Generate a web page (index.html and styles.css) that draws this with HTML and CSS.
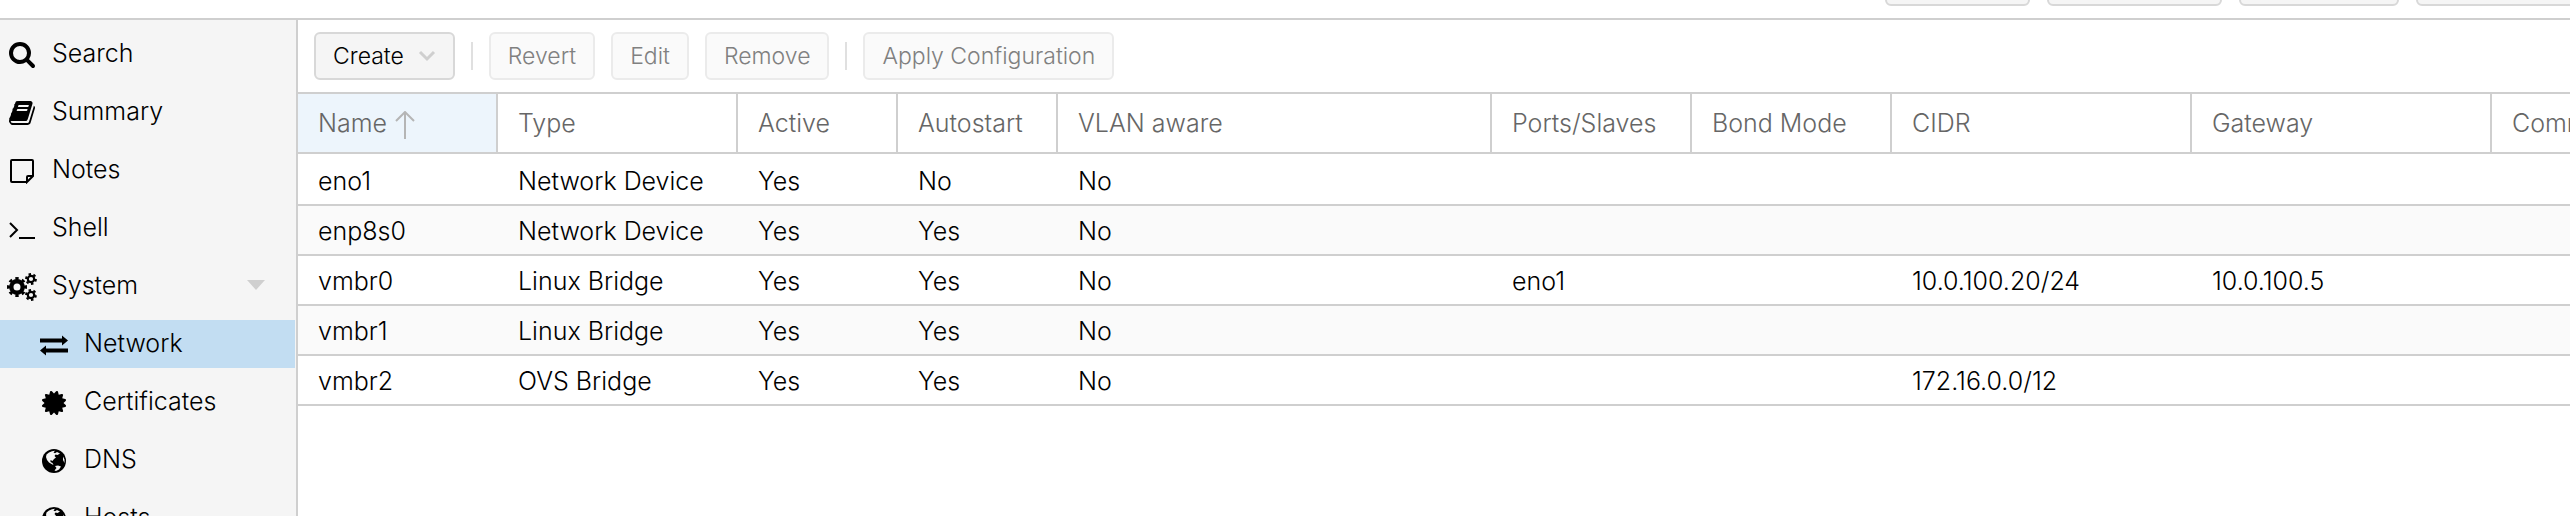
FILE: index.html
```html
<!DOCTYPE html>
<html lang="en">
<head>
<meta charset="utf-8">
<title>Network</title>
<link rel="stylesheet" href="styles.css">
</head>
<body>
<svg class="defs" aria-hidden="true">
  <symbol id="globe" viewBox="0 0 24 24">
    <circle cx="12" cy="12" r="12"/>
    <path fill="#f5f5f5" d="M4.500 5.500L7 3.500 10 2.300 13 1.800 11.500 3.500 13 4.200 15 3 18 4.500 15.500 6 13.500 5.500 12.500 7 14 8.500 12 10 10.500 12 8.500 11 8.500 13 10.500 14 11.500 16 9.500 15 7 13.500 5 11 4 8ZM13 17L16 16.500 19 17.500 17 20.500 14 22 12.500 21.500 14.500 19ZM21 7.500L22.500 10.500 22.500 14 21 11Z"/>
  </symbol>
</svg>
<header class="topbar">
  <button class="btn top-a"></button>
  <button class="btn top-b"></button>
  <button class="btn top-c"></button>
  <button class="btn top-d"></button>
</header>
<div class="layout">
  <nav class="sidebar">
    <a class="item" href="#"><svg class="icon" viewBox="64 128 1664 1664"><path d="M1216 832q0-185-131.500-316.500t-316.500-131.500-316.500 131.500-131.500 316.500 131.500 316.500 316.500 131.500 316.500-131.500 131.500-316.500zm512 832q0 52-38 90t-90 38q-54 0-90-38l-343-342q-179 124-399 124-143 0-273.500-55.500t-225-150-150-225-55.500-273.500 55.500-273.500 150-225 225-150 273.500-55.500 273.500 55.500 225 150 150 225 55.500 273.500q0 220-124 399l343 343q37 37 37 90z"/></svg>Search</a>
    <a class="item" href="#"><svg class="icon" viewBox="64 64 1664 1664"><path d="M1703 478q40 57 18 129l-275 906q-19 64-76.500 107.500t-122.500 43.500h-923q-77 0-148.500-53.500t-99.500-131.500q-24-67-2-127 0-4 3-27t4-37q1-8-3-21.500t-3-19.500q2-11 8-21t16.500-23.500 16.500-23.500q23-38 45-91.500t30-91.500q3-10 .5-30t-.5-28q3-11 17-28t17-23q21-36 42-92t25-90q1-9-2.500-32t.5-28q4-13 22-30.500t22-22.500q19-26 42.500-84.500t27.500-96.500q1-8-3-25.500t-2-26.500q2-8 9-18t18-23 17-21q8-12 16.500-30.500t15-35 16-36 19.500-32 26.500-23.500 36-11.500 47.500 5.500l-1 3q38-9 51-9h761q74 0 114 56t18 130l-274 906q-36 119-71.500 153.500t-128.500 34.500h-869q-27 0-38 15-11 16-1 43 24 70 144 70h923q29 0 56-15.500t35-41.500l300-987q7-22 5-57 38 15 59 43zm-1064 2q-4 13 2 22.500t20 9.500h608q13 0 25.500-9.500t16.500-22.500l21-64q4-13-2-22.500t-20-9.500h-608q-13 0-25.500 9.500t-16.500 22.500zm-83 256q-4 13 2 22.500t20 9.500h608q13 0 25.500-9.500t16.500-22.500l21-64q4-13-2-22.500t-20-9.500h-608q-13 0-25.500 9.500t-16.500 22.500z"/></svg>Summary</a>
    <a class="item" href="#"><svg class="icon" viewBox="0 0 26 26"><path class="line" d="M17.500 24H3Q2 24 2 23V3Q2 2 3 2H23Q24 2 24 3V18L18 24V19Q18 18 19 18H24"/></svg>Notes</a>
    <a class="item" href="#"><svg class="icon" viewBox="0 0 26 26"><path class="line" d="M1 7L8 14 1 21M10 22H26"/></svg>Shell</a>
    <a class="item" href="#"><svg class="icon wide" viewBox="0 0 30 30"><g class="ring"><circle cx="10" cy="15" r="5.700" stroke-width="4.400"/><circle cx="10" cy="15" r="8.500" stroke-width="3" pathLength="16" stroke-dasharray="1 1" stroke-dashoffset=".5"/><circle cx="24" cy="7" r="3.200" stroke-width="2.200"/><circle cx="24" cy="7" r="4.900" stroke-width="2" pathLength="12" stroke-dasharray="1 1"/><circle cx="24" cy="23" r="3.200" stroke-width="2.200"/><circle cx="24" cy="23" r="4.900" stroke-width="2" pathLength="12" stroke-dasharray="1 1"/></g></svg>System<svg class="expander" viewBox="0 0 18 10"><path d="M0 0H18L9 10Z"/></svg></a>
    <a class="item sub selected" href="#"><svg class="icon arrows" viewBox="0 0 28 28"><path d="M0 7.500H22V4.500L28 9.500 22 14.500V11.500H0ZM28 17.500H6V14.500L0 19.500 6 24.500V21.500H28Z"/></svg>Network</a>
    <a class="item sub" href="#"><svg class="icon small" viewBox="128 128 1536 1536"><path d="M1504 896l138 135q30 28 20 70-12 41-52 51l-188 48 53 186q12 41-19 70-29 31-70 19l-186-53-48 188q-10 40-51 52-12 2-19 2-31 0-51-22l-135-138-135 138q-28 30-70 20-41-11-51-52l-48-188-186 53q-41 12-70-19-31-29-19-70l53-186-188-48q-40-10-52-51-10-42 20-70l138-135-138-135q-30-28-20-70 12-41 52-51l188-48-53-186q-12-41 19-70 29-31 70-19l186 53 48-188q10-41 51-51 41-12 70 19l135 139 135-139q29-30 70-19 41 10 51 51l48 188 186-53q41-12 70 19 31 29 19 70l-53 186 188 48q40 10 52 51 10 42-20 70z"/></svg>Certificates</a>
    <a class="item sub" href="#"><svg class="icon small"><use href="#globe"/></svg>DNS</a>
    <a class="item sub" href="#"><svg class="icon small"><use href="#globe"/></svg>Hosts</a>
  </nav>
  <main class="content">
    <div class="toolbar">
      <button class="btn">Create<svg class="chevron" viewBox="0 0 18 12"><path d="M2 2L9 9 16 2"/></svg></button>
      <span class="sep"></span>
      <button class="btn" disabled>Revert</button>
      <button class="btn" disabled>Edit</button>
      <button class="btn" disabled>Remove</button>
      <span class="sep"></span>
      <button class="btn" disabled>Apply Configuration</button>
    </div>
    <table class="grid">
      <colgroup><col class="w200"><col class="w240"><col class="w160"><col class="w160"><col class="w434"><col class="w200"><col class="w200"><col class="w300"><col class="w300"><col></colgroup>
      <thead><tr><th class="sorted">Name<svg class="arrow" viewBox="0 0 20 28"><path d="M10 28V2M1 10L10 1 19 10"/></svg></th><th>Type</th><th>Active</th><th>Autostart</th><th>VLAN aware</th><th>Ports/Slaves</th><th>Bond Mode</th><th>CIDR</th><th>Gateway</th><th>Comment</th></tr></thead>
      <tbody>
        <tr><td>eno1</td><td>Network Device</td><td>Yes</td><td>No</td><td>No</td><td></td><td></td><td></td><td></td><td></td></tr>
        <tr><td>enp8s0</td><td>Network Device</td><td>Yes</td><td>Yes</td><td>No</td><td></td><td></td><td></td><td></td><td></td></tr>
        <tr><td>vmbr0</td><td>Linux Bridge</td><td>Yes</td><td>Yes</td><td>No</td><td>eno1</td><td></td><td>10.0.100.20/24</td><td>10.0.100.5</td><td></td></tr>
        <tr><td>vmbr1</td><td>Linux Bridge</td><td>Yes</td><td>Yes</td><td>No</td><td></td><td></td><td></td><td></td><td></td></tr>
        <tr><td>vmbr2</td><td>OVS Bridge</td><td>Yes</td><td>Yes</td><td>No</td><td></td><td></td><td>172.16.0.0/12</td><td></td><td></td></tr>
      </tbody>
    </table>
  </main>
</div>
</body>
</html>
```
FILE: styles.css
```css
* { box-sizing: border-box; }
body {
  margin: 0;
  height: 100vh;
  display: flex;
  flex-direction: column;
  overflow: hidden;
  background: #fff;
  color: #000;
  font: 300 25px/32px Inter, "Liberation Sans", sans-serif;
}
.defs { display: none; }
.topbar {
  flex: none;
  height: 20px;
  padding-bottom: 12px;
  display: flex;
  justify-content: flex-end;
  align-items: flex-end;
  gap: 17px;
  border-bottom: 2px solid #cfcfcf;
  overflow: hidden;
}
.btn {
  flex: none;
  height: 48px;
  padding: 0 17px;
  display: flex;
  align-items: center;
  border: 2px solid #d8d8d8;
  border-radius: 6px;
  background: #f5f5f5;
  color: #000;
  font: inherit;
  font-size: 23px;
}
.btn:disabled { border-color: #ebebeb; background: #fafafa; color: #808080; }
.top-a { width: 145px; }
.top-b { width: 175px; }
.top-c { width: 160px; }
.top-d { width: 170px; margin-right: -16px; }
.layout { flex: 1; min-height: 0; display: flex; }
.sidebar {
  flex: none;
  width: 298px;
  padding: 10px 1px 0 0;
  display: flex;
  flex-direction: column;
  gap: 10px;
  background: #f5f5f5;
  border-right: 2px solid #cfcfcf;
  overflow: hidden;
}
.item {
  flex: none;
  height: 48px;
  padding: 0 30px 2px 6px;
  display: grid;
  grid-template-columns: 32px 1fr auto;
  column-gap: 14px;
  align-items: center;
  color: inherit;
  text-decoration: none;
}
.sub { padding-left: 38px; }
.selected { background: #c2ddf2; }
.icon { width: 26px; height: 26px; margin-top: 4px; justify-self: center; }
.icon.wide { width: 30px; height: 30px; }
.icon.arrows { width: 28px; height: 28px; }
.icon.small { width: 24px; height: 24px; }
.line { fill: none; stroke: #000; stroke-width: 2; }
.ring { fill: none; stroke: #000; }
.expander { width: 18px; height: 10px; fill: #cfcfcf; }
.content { flex: 1; min-width: 0; overflow: hidden; }
.toolbar { padding: 12px 16px; display: flex; align-items: center; gap: 16px; }
.sep { width: 2px; height: 28px; background: #e0e0e0; }
.chevron { width: 18px; height: 12px; margin-left: 14px; fill: none; stroke: #cfcfcf; stroke-width: 3; }
.grid { width: 100%; table-layout: fixed; border-spacing: 0; border-top: 2px solid #cfcfcf; }
.grid th, .grid td {
  padding: 0 0 0 20px;
  overflow: hidden;
  white-space: nowrap;
  text-align: left;
  font-weight: 300;
  border-bottom: 2px solid #cfcfcf;
}
.grid th { height: 60px; color: #666; border-right: 2px solid #cfcfcf; }
.grid th:last-child { border-right: 0; }
.grid td { height: 50px; padding-top: 2px; }
.grid tbody tr:first-child td { height: 52px; padding-top: 4px; }
.grid tbody tr:nth-child(even) { background: #fafafa; }
.grid .sorted { background: #edf5fc; }
.arrow { width: 20px; height: 28px; margin-left: 8px; vertical-align: middle; fill: none; stroke: #b5b5b5; stroke-width: 2; }
.w160 { width: 160px; }
.w200 { width: 200px; }
.w240 { width: 240px; }
.w300 { width: 300px; }
.w434 { width: 434px; }
```
